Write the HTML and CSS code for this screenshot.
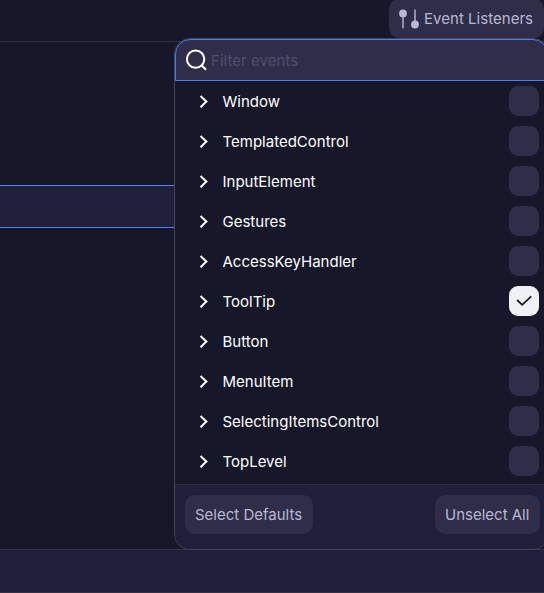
FILE: index.html
```html
<!DOCTYPE html>
<html lang="en">
<head>
<meta charset="utf-8">
<title>Event Listeners</title>
<link rel="stylesheet" href="styles.css">
</head>
<body>
<div class="app">
  <header class="toolbar">
    <button class="btn listeners">
      <svg class="listeners-icon" width="20" height="20" viewBox="0 0 20 20"><path d="M4 4v15.2M16 .5v15" stroke="currentColor" stroke-width="1.4"/><circle cx="4" cy="4.4" r="3.9" fill="currentColor"/><circle cx="16" cy="15.5" r="3.9" fill="currentColor"/></svg>
      <span>Event Listeners</span>
    </button>
  </header>
  <main class="content"><div class="selected-row"></div></main>
  <footer class="statusbar"></footer>
</div>
<section class="popup">
  <div class="search">
    <svg width="22" height="22" viewBox="0 0 22 22" fill="none" stroke="#fff" stroke-width="2"><circle cx="10.6" cy="10.1" r="8.7"/><path d="M16.3 16l4.7 4.7"/></svg>
    <span class="placeholder">Filter events</span>
  </div>
  <ul class="events">
    <li><i class="chevron"></i><span>Window</span><b class="check"></b></li>
    <li><i class="chevron"></i><span>TemplatedControl</span><b class="check"></b></li>
    <li><i class="chevron"></i><span>InputElement</span><b class="check"></b></li>
    <li><i class="chevron"></i><span>Gestures</span><b class="check"></b></li>
    <li><i class="chevron"></i><span>AccessKeyHandler</span><b class="check"></b></li>
    <li><i class="chevron"></i><span>ToolTip</span><b class="check on"><svg width="30" height="30" viewBox="0 0 30 30" fill="none" stroke="#18182b" stroke-width="1.8"><path d="M8.1 14l5.1 4.8 9-8.5"/></svg></b></li>
    <li><i class="chevron"></i><span>Button</span><b class="check"></b></li>
    <li><i class="chevron"></i><span>MenuItem</span><b class="check"></b></li>
    <li><i class="chevron"></i><span>SelectingItemsControl</span><b class="check"></b></li>
    <li><i class="chevron"></i><span>TopLevel</span><b class="check"></b></li>
  </ul>
  <div class="actions">
    <button class="btn defaults">Select Defaults</button>
    <button class="btn unselect">Unselect All</button>
  </div>
</section>
</body>
</html>
```
FILE: styles.css
```css
* { box-sizing: border-box; }
body {
  margin: 0;
  height: 593px;
  overflow: hidden;
  position: relative;
  background: #17172a;
  color: #fff;
  font: 15px/20px Inter, sans-serif;
}
.app { height: 593px; display: flex; flex-direction: column; }
.toolbar {
  height: 42px;
  display: flex;
  justify-content: flex-end;
  align-items: flex-start;
  border-bottom: 1px solid #302e43;
}
.btn {
  height: 39px;
  padding: 0 10px;
  border: 0;
  border-radius: 10px;
  background: #2f2d48;
  color: #b9b8d3;
  font: inherit;
  text-align: left;
  white-space: nowrap;
}
.listeners {
  display: flex;
  align-items: center;
  gap: 5px;
  width: 155px;
  margin-top: -1px;
  padding: 0 0 0 10px;
  letter-spacing: 0.03px;
}
.defaults { width: 128px; }
.unselect { width: 105px; }
.listeners-icon { flex: none; }
.content { flex: 1; padding-top: 143px; }
.selected-row {
  height: 43px;
  background: #21203b;
  border: solid #5081f8;
  border-width: 1px 0;
}
.statusbar {
  height: 44px;
  background: #201f3a;
  border-top: 1px solid #343247;
  border-bottom: 1px solid #35323b;
}
.popup {
  position: absolute;
  left: 174px;
  top: 38px;
  width: 375px;
  height: 512px;
  display: flex;
  flex-direction: column;
  overflow: hidden;
  border: 1px solid #45435d;
  border-radius: 16px;
  background: #17172a;
}
.search {
  height: 42px;
  flex: none;
  display: flex;
  align-items: center;
  padding-left: 9px;
  gap: 4px;
  border: 1px solid #4b7cf6;
  border-radius: 15px 15px 0 0;
  background: #2f2d48;
}
.placeholder { color: #504e6e; padding-top: 2px; letter-spacing: 0.05px; }
.events { flex: 1; list-style: none; margin: 0; padding: 0; }
.events li {
  height: 40px;
  display: flex;
  align-items: center;
  padding: 0 9px 0 22px;
}
.events span { flex: 1; margin-left: 17px; padding-top: 2px; }
.chevron {
  width: 8.5px;
  height: 8.5px;
  border: solid #fff;
  border-width: 2px 2px 0 0;
  transform: rotate(45deg);
}
.check {
  width: 30px;
  height: 30px;
  border-radius: 9px;
  background: #2f2d48;
}
.check.on { background: #f0f0f7; }
.check svg { display: block; }
.actions {
  height: 65px;
  flex: none;
  display: flex;
  justify-content: space-between;
  align-items: flex-start;
  padding: 10px 8px 0 10px;
  border-top: 1px solid #302e43;
  background: #201f3a;
}
```
